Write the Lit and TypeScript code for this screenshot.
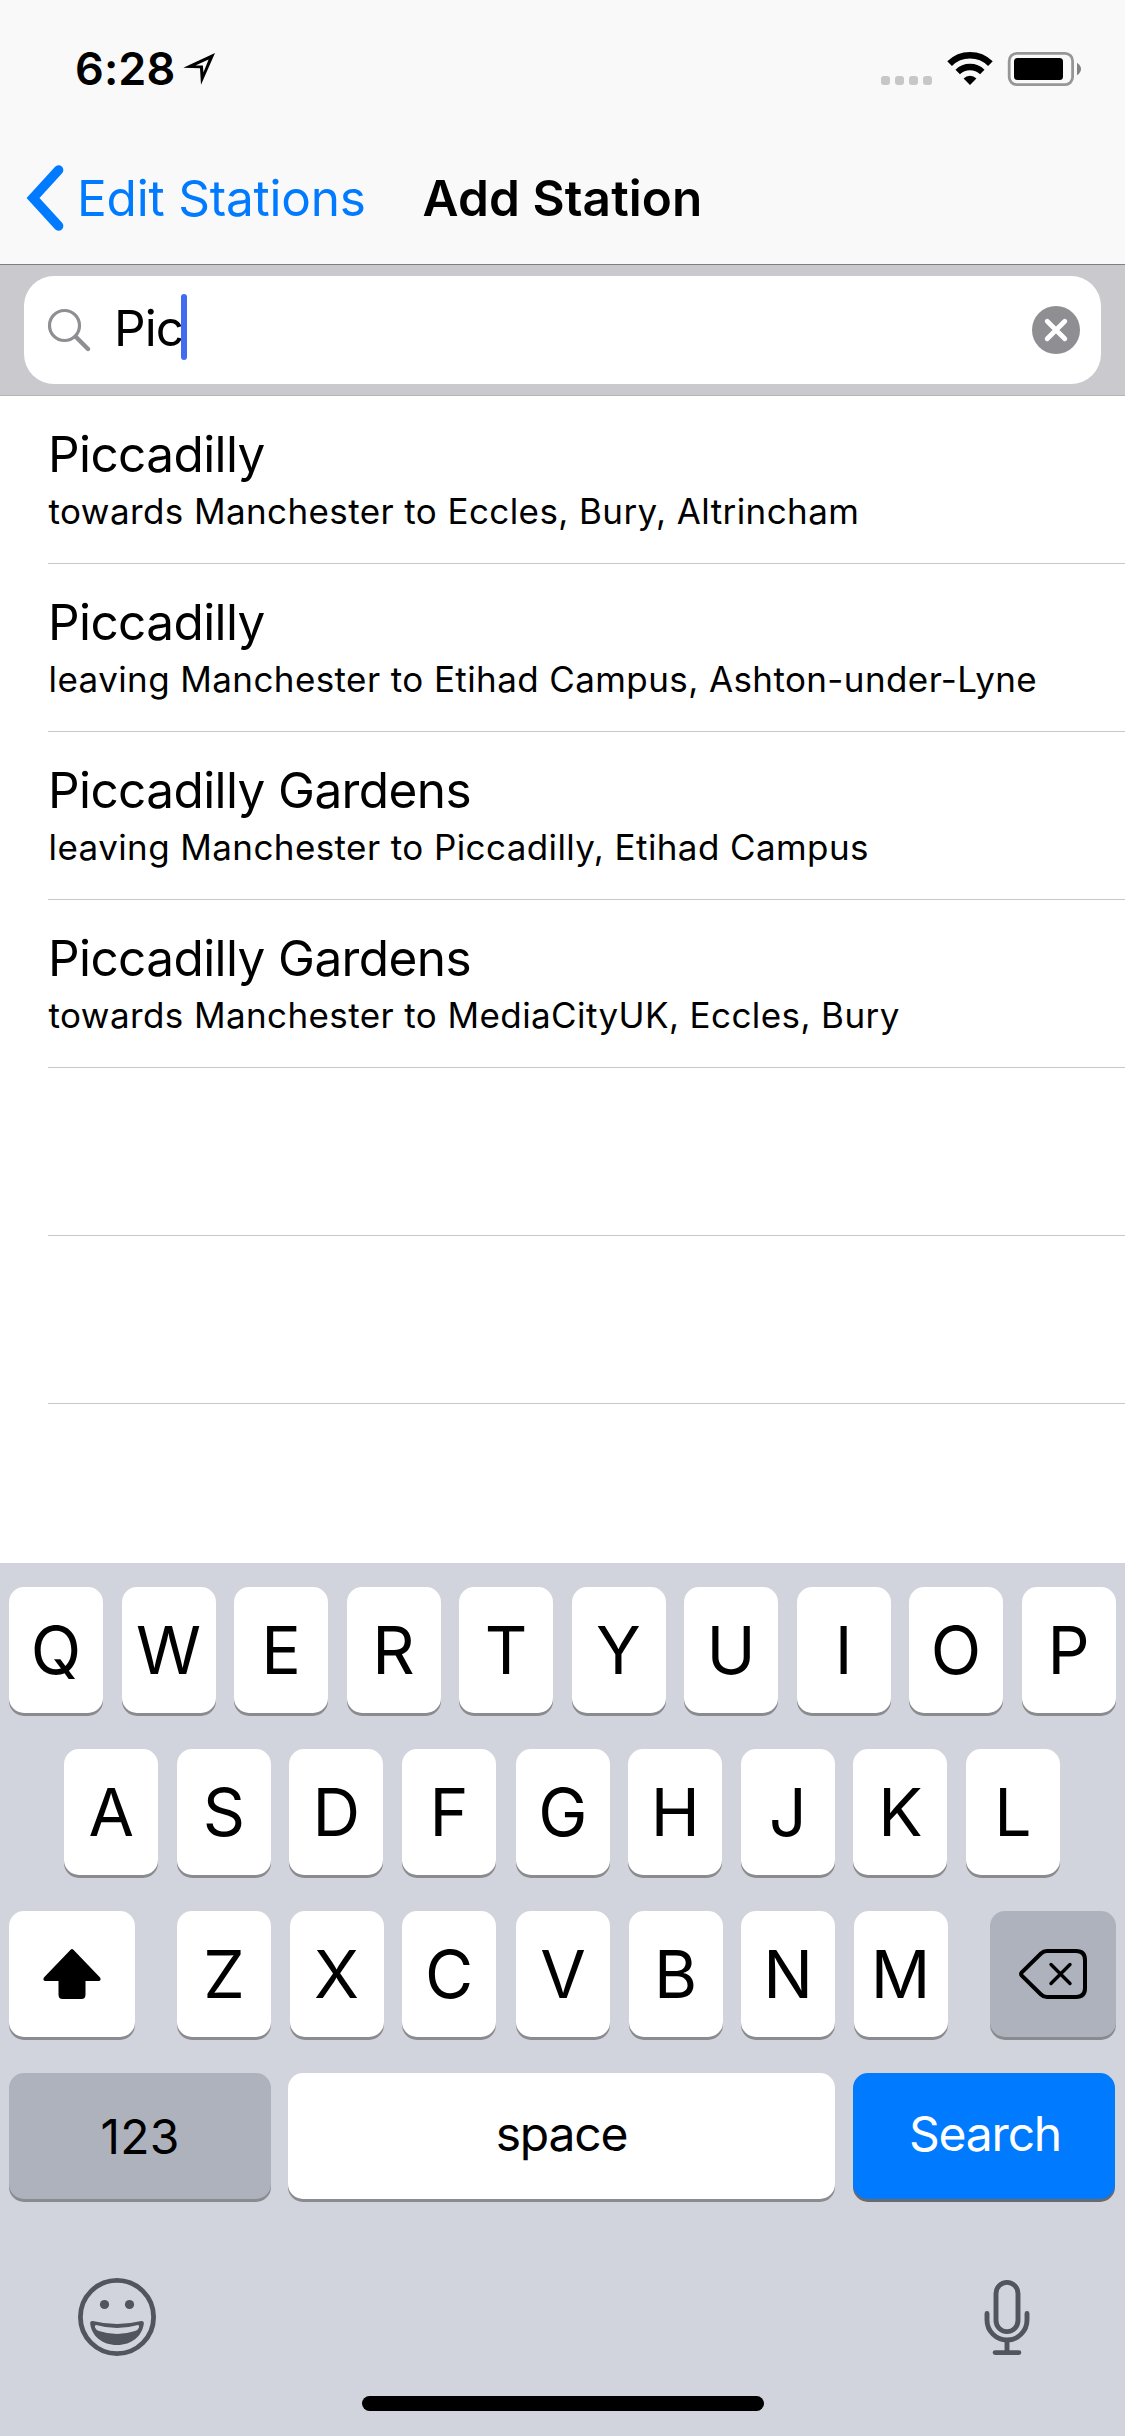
import { LitElement, html, css, svg, nothing } from "lit";
import { customElement, property } from "lit/decorators.js";
import { classMap } from "lit/directives/class-map.js";

interface Station {
  name: string;
  detail: string;
}

const STATIONS: Station[] = [
  { name: "Piccadilly", detail: "towards Manchester to Eccles, Bury, Altrincham" },
  { name: "Piccadilly", detail: "leaving Manchester to Etihad Campus, Ashton-under-Lyne" },
  { name: "Piccadilly Gardens", detail: "leaving Manchester to Piccadilly, Etihad Campus" },
  { name: "Piccadilly Gardens", detail: "towards Manchester to MediaCityUK, Eccles, Bury" },
];

const EMPTY_ROWS = [0, 1];

@customElement("status-bar")
class StatusBar extends LitElement {
  static styles = css`
    :host {
      display: flex;
      height: 132px;
      box-sizing: border-box;
      padding: 39px 44px 33px 75px;
      align-items: center;
      justify-content: space-between;
    }
    .left,
    .right {
      display: flex;
      align-items: center;
    }
    .time {
      font-size: 45px;
      line-height: 60px;
      font-weight: 600;
      letter-spacing: 0.1px;
      width: 108px;
    }
    svg {
      display: block;
    }
  `;
  render() {
    return html`
      <div class="left">
        <span class="time">6:28</span>
        <svg width="34" height="34" viewBox="183 55 34 34">
          <path fill-rule="evenodd" d="M215 56 L201 87.8 L200 71.2 L183.3 70.8 Z M208.6 62.4 L195.5 68.4 L202.9 68.4 L203.4 75.4 Z" />
        </svg>
      </div>
      <div class="right">
        <svg width="200" height="36" viewBox="881 51 200 36">
          <g fill="#c7c7c7">
            ${[881, 895, 909, 923].map((x) => svg`<rect x=${x} y="76" width="9" height="9" rx="3" />`)}
          </g>
          <path d="M970 85 L963.6 78.4 A9 9 0 0 1 976.4 78.4 Z" />
          <path d="M957.7 72 A17.6 17.6 0 0 1 982.3 72" fill="none" stroke="#000" stroke-width="6.4" />
          <path d="M949.6 63.6 A29 29 0 0 1 990.4 63.6" fill="none" stroke="#000" stroke-width="6.6" />
          <rect x="1009.2" y="53.4" width="63.4" height="31.2" rx="7.5" fill="none" stroke="#969696" stroke-width="2.8" />
          <rect x="1014" y="58" width="49" height="22" rx="3.5" />
          <path fill="#828282" d="M1077 62.7 Q1081 65.4 1081 69 Q1081 72.6 1077 75.3 Z" />
        </svg>
      </div>
    `;
  }
}

@customElement("nav-bar")
class NavBar extends LitElement {
  static styles = css`
    :host {
      display: grid;
      grid-template-columns: 1fr auto 1fr;
      align-items: center;
      height: 133px;
      box-sizing: border-box;
      border-bottom: 1px solid #7f7f83;
      font-size: 49.5px;
      line-height: 60px;
      white-space: nowrap;
    }
    .back {
      display: flex;
      align-items: center;
      gap: 13px;
      padding-left: 26px;
      color: #007aff;
      letter-spacing: -0.2px;
    }
    .title {
      font-weight: 600;
      letter-spacing: 0.1px;
    }
  `;
  render() {
    return html`
      <div class="back">
        <svg width="38" height="66" viewBox="0 0 38 66" fill="none" stroke="#007aff" stroke-width="9.5" stroke-linecap="round" stroke-linejoin="miter">
          <path d="M32.6 5 L7 33 L32.6 61" />
        </svg>
        <span>Edit Stations</span>
      </div>
      <div class="title">Add Station</div>
    `;
  }
}

@customElement("search-bar")
class SearchBar extends LitElement {
  @property() value = "";
  static styles = css`
    :host {
      display: block;
      height: 131px;
      box-sizing: border-box;
      padding: 11px 24px;
      background: #c9c9ce;
      border-bottom: 1px solid #b4b4b8;
    }
    .field {
      display: flex;
      align-items: center;
      height: 108px;
      box-sizing: border-box;
      padding: 0 21px 0 23px;
      background: #fff;
      border-radius: 30px;
    }
    .value {
      flex: 1;
      display: flex;
      align-items: center;
      padding-left: 23px;
      margin-top: -4px;
      font-size: 49.5px;
      line-height: 60px;
      letter-spacing: -0.9px;
    }
    .caret {
      width: 6px;
      height: 66px;
      margin: 0 0 2px -2.2px;
      border-radius: 3px;
      background: #426bf2;
      z-index: 1;
    }
  `;
  render() {
    return html`
      <div class="field">
        <svg width="44" height="44" viewBox="47 307 44 44" fill="none" stroke="#8e8e93" stroke-linecap="round">
          <circle cx="64.5" cy="324.5" r="15" stroke-width="3.2" />
          <path d="M76 336 L88 348" stroke-width="4.4" />
        </svg>
        <div class="value"><span>${this.value}</span><i class="caret"></i></div>
        <svg width="48" height="48" viewBox="0 0 48 48">
          <circle cx="24" cy="24" r="24" fill="#8e8e93" />
          <path d="M15.2 15.2 L32.8 32.8 M32.8 15.2 L15.2 32.8" stroke="#fff" stroke-width="4.8" stroke-linecap="round" />
        </svg>
      </div>
    `;
  }
}

@customElement("station-row")
class StationRow extends LitElement {
  @property({ attribute: false }) station?: Station;
  static styles = css`
    :host {
      display: block;
      height: 168px;
      box-sizing: border-box;
      padding-left: 48px;
      white-space: nowrap;
    }
    .cell {
      display: flex;
      flex-direction: column;
      height: 168px;
      box-sizing: border-box;
      padding-top: 28px;
      border-bottom: 1px solid #c8c7cc;
    }
    .name {
      font-size: 49.5px;
      line-height: 60px;
      letter-spacing: -0.6px;
    }
    .detail {
      font-size: 35px;
      line-height: 44px;
      margin-top: 5px;
      padding-left: 0.6px;
      letter-spacing: 0.4px;
    }
  `;
  render() {
    return html`<div class="cell">
      ${this.station
        ? html`<div class="name">${this.station.name}</div>
            <div class="detail">${this.station.detail}</div>`
        : nothing}
    </div>`;
  }
}

@customElement("soft-keyboard")
class SoftKeyboard extends LitElement {
  static styles = css`
    :host {
      display: flex;
      flex-direction: column;
      height: 873px;
      box-sizing: border-box;
      padding-top: 24px;
      background: #d1d4dc;
    }
    .row {
      display: flex;
      gap: 18.5px;
      height: 126px;
      margin-bottom: 36px;
      padding: 0 9px;
    }
    .row.second {
      padding-left: 64.4px;
    }
    .row.fourth {
      gap: 18px;
      margin-bottom: 0;
    }
    .key {
      display: flex;
      align-items: center;
      justify-content: center;
      flex: none;
      width: 94px;
      border-radius: 15px;
      background: #fff;
      box-shadow: 0 3px 0 #8a8b8f;
      font-size: 66px;
      line-height: 80px;
    }
    .key.nudge {
      margin-left: 1.5px;
    }
    .key.shift {
      width: 126px;
      margin-right: 23.5px;
    }
    .key.delete {
      width: 126px;
      margin-left: 24px;
      background: #aeb2bd;
    }
    .key.word {
      font-size: 48px;
      line-height: 60px;
    }
    .key.numbers {
      width: 262px;
      background: #aeb2bd;
      letter-spacing: 0.2px;
    }
    .key.space {
      width: 547px;
      margin-left: -1px;
      letter-spacing: -1.2px;
    }
    .key.search {
      width: 262px;
      background: #007aff;
      color: #fff;
      box-shadow: 0 3px 0 #696a6e;
      letter-spacing: -1.2px;
    }
    .word span {
      margin-top: -4px;
    }
    .numbers span {
      margin-top: 2px;
    }
    .search span {
      padding-left: 2px;
    }
    .tools {
      display: flex;
      justify-content: space-between;
      padding: 77px 93px 0 76px;
    }
    .home {
      width: 402px;
      height: 15px;
      margin: 38px auto 0;
      border-radius: 8px;
      background: #000;
    }
    svg {
      display: block;
    }
  `;

  private letters(chars: string, nudged = "") {
    return [...chars].map(
      (c) => html`<div class=${classMap({ key: true, nudge: c === nudged })}>${c}</div>`
    );
  }

  render() {
    return html`
      <div class="row">${this.letters("QWERTYUIOP")}</div>
      <div class="row second">${this.letters("ASDFGHJKL", "G")}</div>
      <div class="row">
        <div class="key shift">
          <svg width="58" height="50" viewBox="0 0 58 50">
            <path d="M27.6 0.8 Q29 -0.6 30.4 0.8 L56.6 28 Q58 29.6 57.4 31 Q57 32 55.5 32 L42.5 32 L42.5 45.5 Q42.5 50 38.5 50 L19.5 50 Q15.5 50 15.5 45.5 L15.5 32 L2.5 32 Q1 32 0.6 31 Q0 29.6 1.4 28 Z" />
          </svg>
        </div>
        ${this.letters("ZXCVBNM", "V")}
        <div class="key delete">
          <svg width="68" height="50" viewBox="0 0 68 50" fill="none" stroke="#000" stroke-linecap="round" stroke-linejoin="round">
            <path d="M28 2 L57 2 Q66 2 66 11 L66 39 Q66 48 57 48 L28 48 Q24.5 48 22 45.5 L2.8 26.6 Q1.4 25 2.8 23.4 L22 4.5 Q24.5 2 28 2 Z" stroke-width="4" />
            <path d="M32 15.5 L51 34.5 M51 15.5 L32 34.5" stroke-width="3.4" />
          </svg>
        </div>
      </div>
      <div class="row fourth">
        <div class="key word numbers"><span>123</span></div>
        <div class="key word space"><span>space</span></div>
        <div class="key word search"><span>Search</span></div>
      </div>
      <div class="tools">
        <svg width="82" height="82" viewBox="76 2276 82 82">
          <circle cx="117" cy="2317" r="36.6" fill="none" stroke="#50555e" stroke-width="4.8" />
          <ellipse cx="104.5" cy="2304.5" rx="4.6" ry="4.6" fill="#50555e" />
          <ellipse cx="129.5" cy="2304.5" rx="4.6" ry="4.6" fill="#50555e" />
          <path fill="#50555e" fill-rule="evenodd" d="M92.8 2321 Q117 2327 141.2 2321 Q144.2 2320.8 143.8 2324 C142 2336 132 2345 117 2345 C102 2345 92 2336 90.2 2324 Q89.8 2320.8 92.8 2321 Z M96 2325 Q94.4 2325.4 95 2327.4 Q96 2330 99 2331 Q117 2337 135 2331 Q138 2330 139 2327.4 Q139.6 2325.4 138 2325 Q117 2331 96 2325 Z" />
        </svg>
        <svg width="50" height="82" viewBox="981.5 2276 50 82" fill="none" stroke="#50555e" stroke-width="4.9" stroke-linecap="round">
          <rect x="995.5" y="2282.4" width="22" height="49.2" rx="11" />
          <path d="M986.5 2313.4 L986.5 2320 A20 20 0 0 0 1026.5 2320 L1026.5 2313.4" />
          <path d="M1006.5 2341 L1006.5 2352.4 M994.6 2352.6 L1018.4 2352.6" />
        </svg>
      </div>
      <div class="home"></div>
    `;
  }
}

@customElement("app-root")
class AppRoot extends LitElement {
  static styles = css`
    :host {
      display: flex;
      flex-direction: column;
      width: 1125px;
      height: 2436px;
      overflow: hidden;
      background: #fff;
      color: #000;
      font-family: Inter, "Liberation Sans", sans-serif;
    }
    .chrome {
      background: #f9f9f9;
    }
    .results {
      flex: 1;
      min-height: 0;
      overflow: hidden;
    }
  `;
  render() {
    return html`
      <div class="chrome">
        <status-bar></status-bar>
        <nav-bar></nav-bar>
      </div>
      <search-bar value="Pic"></search-bar>
      <div class="results">
        ${STATIONS.map((s) => html`<station-row .station=${s}></station-row>`)}
        ${EMPTY_ROWS.map(() => html`<station-row></station-row>`)}
      </div>
      <soft-keyboard></soft-keyboard>
    `;
  }
}
